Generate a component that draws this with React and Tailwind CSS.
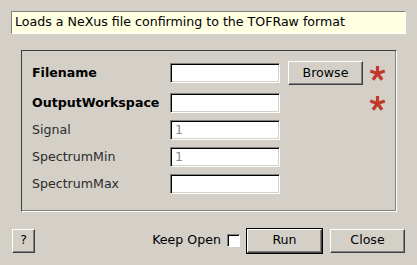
import React from 'react';

const font = { fontFamily: '"DejaVu Sans", Verdana, sans-serif' };

function Star() {
  return (
    <svg width="17" height="16" viewBox="0 0 17 16" className="block">
      <g stroke="#c0392b" strokeWidth="3.2" strokeLinecap="butt">
        <line x1="8.5" y1="8.5" x2="8.5" y2="1" />
        <line x1="8.5" y1="8.5" x2="1.2" y2="6" />
        <line x1="8.5" y1="8.5" x2="15.8" y2="6" />
        <line x1="8.5" y1="8.5" x2="4" y2="14.8" />
        <line x1="8.5" y1="8.5" x2="13" y2="14.8" />
      </g>
    </svg>
  );
}

function Field({ value }) {
  return (
    <div className="w-[110px] h-[20px] bg-white border border-t-[#808080] border-l-[#808080] border-r-white border-b-white shadow-[inset_1px_1px_0_#000,inset_-1px_-1px_0_#d4d0c8] pl-[4px] flex items-center text-[12.6px] text-[#8a8a8a]">
      {value}
    </div>
  );
}

function Btn({ children, className = '', isDefault = false }) {
  const inner = (
    <div className="h-full w-full flex items-center justify-center border border-t-white border-l-white border-r-[#404040] border-b-[#404040] shadow-[inset_-1px_-1px_0_#808080] bg-[#d4d0c8] text-[12.6px] text-black">
      {children}
    </div>
  );
  if (isDefault) {
    return <div className={`border border-black ${className}`}>{inner}</div>;
  }
  return <div className={className}>{inner}</div>;
}

export default function App() {
  const rows = [
    { label: 'Filename', bold: true, value: '', browse: true, star: true },
    { label: 'OutputWorkspace', bold: true, value: '', star: true },
    { label: 'Signal', value: '1' },
    { label: 'SpectrumMin', value: '1' },
    { label: 'SpectrumMax', value: '' },
  ];

  return (
    <div className="w-[417px] h-[265px] bg-[#d4d0c8] pt-[11px] text-black" style={font}>
      <div className="ml-[11px] w-[395px] h-[23px] bg-[#ffffe1] border border-t-[#808080] border-l-[#808080] border-r-white border-b-white flex items-center pl-[3px] text-[12.6px]">
        Loads a NeXus file confirming to the TOFRaw format
      </div>

      <div className="ml-[21px] mt-[16px] w-[376px] h-[162px] border border-t-[#404040] border-l-[#404040] border-r-white border-b-white shadow-[inset_-1px_-1px_0_#808080] pt-[10px] pl-[10px]">
        {rows.map((r, i) => (
          <div
            key={r.label}
            className={`flex items-center ${r.browse ? 'h-[24px]' : 'h-[20px]'} ${i === 0 ? '' : i === 1 ? 'mt-[8px]' : 'mt-[7px]'}`}
          >
            <div className={`w-[138px] text-[12.6px] ${r.bold ? 'font-bold text-black' : 'text-[#2b2b2b]'}`}>{r.label}</div>
            <Field value={r.value} />
            <div className="w-[83px] pl-[8px] h-full">
              {r.browse && <Btn className="w-[75px] h-[24px]">Browse</Btn>}
            </div>
            <div className="w-[17px] ml-[6px]">{r.star && <Star />}</div>
          </div>
        ))}
      </div>

      <div className="mt-[16px] flex items-center px-[12px] h-[25px]">
        <Btn className="w-[23px] h-[24px]">?</Btn>
        <div className="flex-1" />
        <div className="text-[12.6px] mr-[6px]">Keep Open</div>
        <div className="w-[13px] h-[13px] bg-white border border-t-[#808080] border-l-[#808080] border-r-white border-b-white shadow-[inset_1px_1px_0_#000]" />
        <Btn isDefault className="ml-[6px] w-[77px] h-[26px]">Run</Btn>
        <Btn className="ml-[7px] w-[75px] h-[24px]">Close</Btn>
      </div>
    </div>
  );
}
